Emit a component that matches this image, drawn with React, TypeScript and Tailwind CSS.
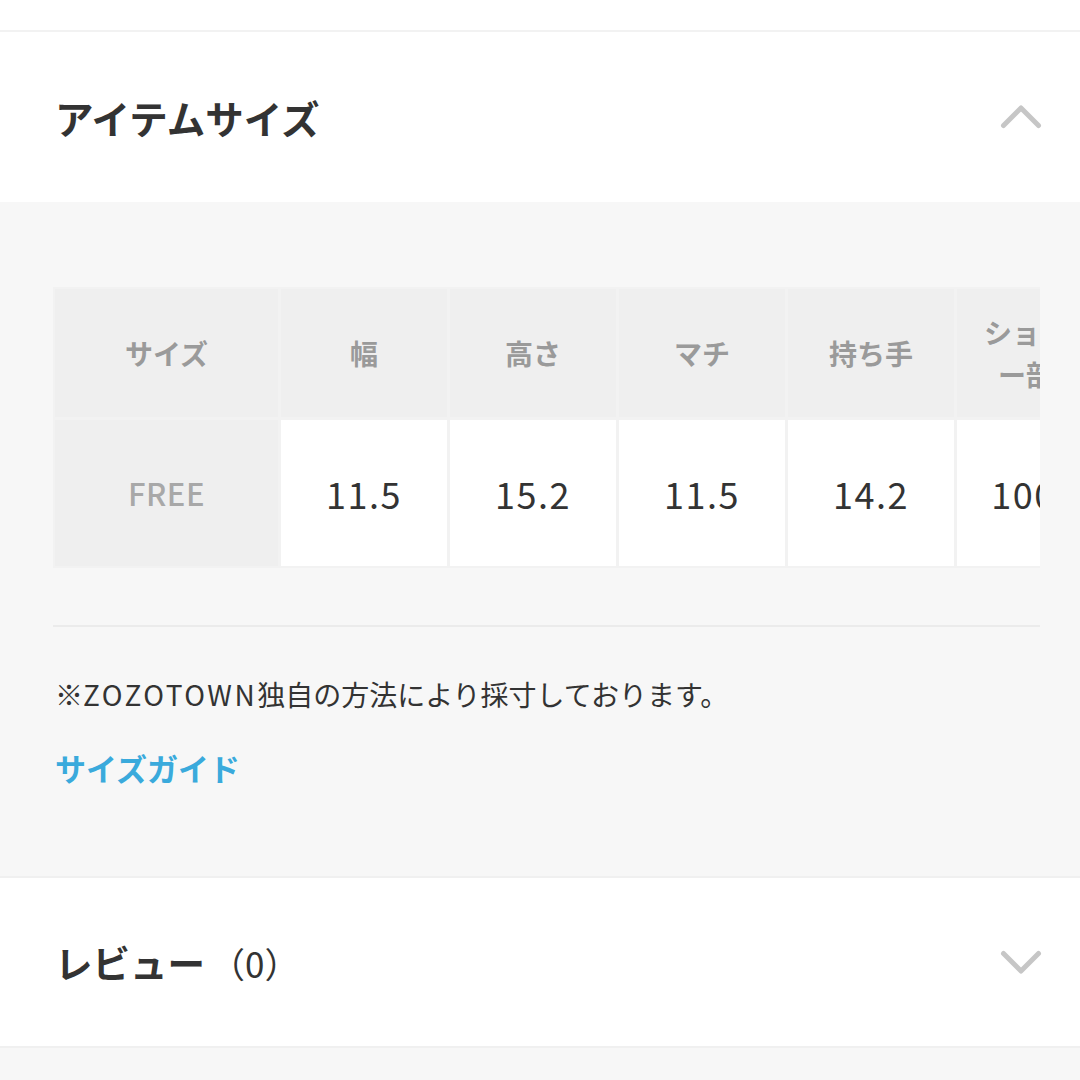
import React from 'react';

const font = { fontFamily: '"Noto Sans CJK JP", "Noto Sans", sans-serif' };

const columns = [
  { label: '幅', value: '11.5' },
  { label: '高さ', value: '15.2' },
  { label: 'マチ', value: '11.5' },
  { label: '持ち手', value: '14.2' },
  { label: 'ショルダ\nー部分', value: '100.0' },
];

function Chevron({ up }: { up?: boolean }) {
  return (
    <svg width="44" height="26" viewBox="0 0 44 26" className="shrink-0">
      <polyline
        points={up ? '4.5,21.5 22,4 39.5,21.5' : '4.5,4.5 22,22 39.5,4.5'}
        fill="none"
        stroke="#c6c6c6"
        strokeWidth="5"
        strokeLinecap="round"
        strokeLinejoin="round"
      />
    </svg>
  );
}

export default function App() {
  return (
    <div className="w-[1080px] h-[1080px] overflow-hidden bg-[#f7f7f7] text-[#333]" style={font}>
      <div className="h-[30px] bg-white" />
      <div className="h-[2px] bg-[#f2f2f2]" />

      {/* アイテムサイズ */}
      <div className="h-[170px] bg-white flex items-center justify-between pl-[55px] pr-[37px]">
        <h2 className="text-[38.5px] font-bold leading-none">アイテムサイズ</h2>
        <Chevron up />
      </div>

      <div className="h-[674px] pt-[85px] pl-[53px] pr-[40px]">
        <div className="overflow-hidden bg-[#f2f2f2] p-[2px]">
          <div className="flex gap-[3px] w-max">
            <div className="w-[223px] flex flex-col gap-[3px]">
              <div className="h-[128px] bg-[#efefef] flex items-center justify-center text-[28px] font-bold text-[#9a9a9a]">
                サイズ
              </div>
              <div className="h-[146px] bg-[#efefef] flex items-center justify-center text-[31px] font-medium tracking-[0.5px] text-[#a8a8a8]">
                FREE
              </div>
            </div>
            {columns.map((c) => (
              <div key={c.label} className="w-[166px] flex flex-col gap-[3px]">
                <div className="h-[128px] bg-[#efefef] flex items-center justify-center text-center text-[28px] font-bold text-[#9a9a9a] leading-[42px] whitespace-pre-line">
                  {c.label}
                </div>
                <div className="h-[146px] bg-white flex items-center justify-center text-[36px] font-normal tracking-[1.5px] text-[#333]">
                  {c.value}
                </div>
              </div>
            ))}
          </div>
        </div>

        <div className="mt-[57px] h-[2px] bg-[#ebebeb]" />

        <p className="mt-[47px] pl-[2px] text-[28px] leading-[40px] text-[#333]">
          ※<span className="tracking-[2.5px]">ZOZOTOWN</span>独自の方法により採寸しております。
        </p>
        <p className="mt-[34px] pl-[2px] text-[31px] leading-[40px] font-bold text-[#3aaadc]">サイズガイド</p>
      </div>

      <div className="h-[2px] bg-[#f0f0f0]" />

      {/* レビュー */}
      <div className="h-[168px] bg-white flex items-center justify-between pl-[55px] pr-[37px]">
        <div className="flex items-center">
          <h2 className="text-[37.5px] font-bold leading-none">レビュー</h2>
          <span className="ml-[5px] text-[35px] leading-none text-[#333]">（0）</span>
        </div>
        <Chevron />
      </div>
      <div className="h-[2px] bg-[#f0f0f0]" />
    </div>
  );
}
